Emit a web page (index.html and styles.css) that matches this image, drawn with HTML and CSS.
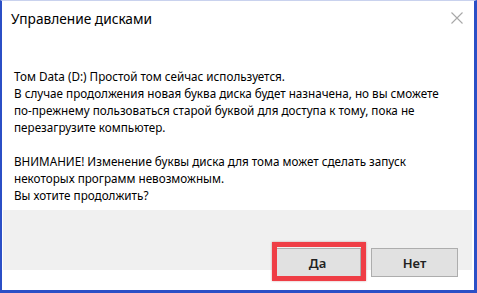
FILE: index.html
```html
<!DOCTYPE html>
<html lang="ru">
  <head>
    <meta charset="UTF-8" />
    <meta name="viewport" content="width=device-width, initial-scale=1.0" />
    <title>Управление дисками</title>
    <link rel="stylesheet" href="styles.css">
  </head>
  <body>
    <div class="dialog-window">
      <div class="dialog-titlebar">
        <span class="dialog-title">Управление дисками</span>
        <span class="dialog-close">
          <svg width="12" height="12" viewBox="0 0 12 12">
            <path d="M0.5 0.5 L11.5 11.5 M11.5 0.5 L0.5 11.5" stroke="#a8a8a8" stroke-width="1.1" fill="none"/>
          </svg>
        </span>
      </div>

      <div class="dialog-content">
        <p>Том Data (D:) Простой том сейчас используется.<br>
        В случае продолжения новая буква диска будет назначена, но вы сможете<br>
        по-прежнему пользоваться старой буквой для доступа к тому, пока не<br>
        перезагрузите компьютер.</p>
        <p>ВНИМАНИЕ! Изменение буквы диска для тома может сделать запуск<br>
        некоторых программ невозможным.<br>
        Вы хотите продолжить?</p>
      </div>

      <div class="dialog-footer">
        <button class="dialog-btn">Да</button>
        <button class="dialog-btn">Нет</button>
        <!-- red highlight drawn over the "yes" button -->
        <div class="highlight-box"></div>
      </div>
    </div>
  </body>
</html>
```

FILE: styles.css
```css
body {
  margin: 0;
  width: 477px;
  height: 293px;
  overflow: hidden;
  font-family: "Noto Sans", "Liberation Sans", sans-serif;
  color: #000;
}

.dialog-window {
  box-sizing: border-box;
  width: 477px;
  height: 293px;
  background: #fff;
  border-left: 2px solid #2b4fc6;
  border-right: 3px solid #2b4fc6;
  border-bottom: 3px solid #2b4fc6;
  border-top: 1px solid #c9d2ee;
  display: flex;
  flex-direction: column;
}

.dialog-titlebar {
  height: 39px;
  display: flex;
  justify-content: space-between;
  align-items: flex-start;
  padding: 8px 11px 0 9px;
  box-sizing: border-box;
}

.dialog-title {
  font-size: 13.7px;
  line-height: 20px;
}

.dialog-close {
  display: flex;
  margin-top: 3px;
}

.dialog-content {
  height: 170px;
  box-sizing: border-box;
  padding: 28px 0 6px 12px;
  font-size: 11.7px;
  line-height: 17px;
}

.dialog-content p {
  margin: 0 0 17px;
}

.dialog-content p:last-child {
  margin-bottom: 0;
}

.dialog-footer {
  position: relative;
  flex: 1;
  margin-left: 1px;
  margin-right: 2px;
  background: linear-gradient(#f0f0f0 60px, #fff 60px);
  display: flex;
  justify-content: flex-end;
  align-items: flex-start;
  gap: 10px;
  padding: 38px 14px 0 0;
  box-sizing: border-box;
}

.dialog-btn {
  width: 87px;
  height: 29px;
  background: #e1e1e1;
  border: 1px solid #adadad;
  font-family: "Noto Sans", "Liberation Sans", sans-serif;
  font-size: 13px;
  font-weight: 600;
  color: #222;
  padding: 0;
}

.highlight-box {
  position: absolute;
  left: 269px;
  top: 32px;
  width: 94px;
  height: 39px;
  box-sizing: border-box;
  border: 5px solid #ef3d45;
  box-shadow: 0 0 2px rgba(120, 0, 0, 0.35);
}
```
